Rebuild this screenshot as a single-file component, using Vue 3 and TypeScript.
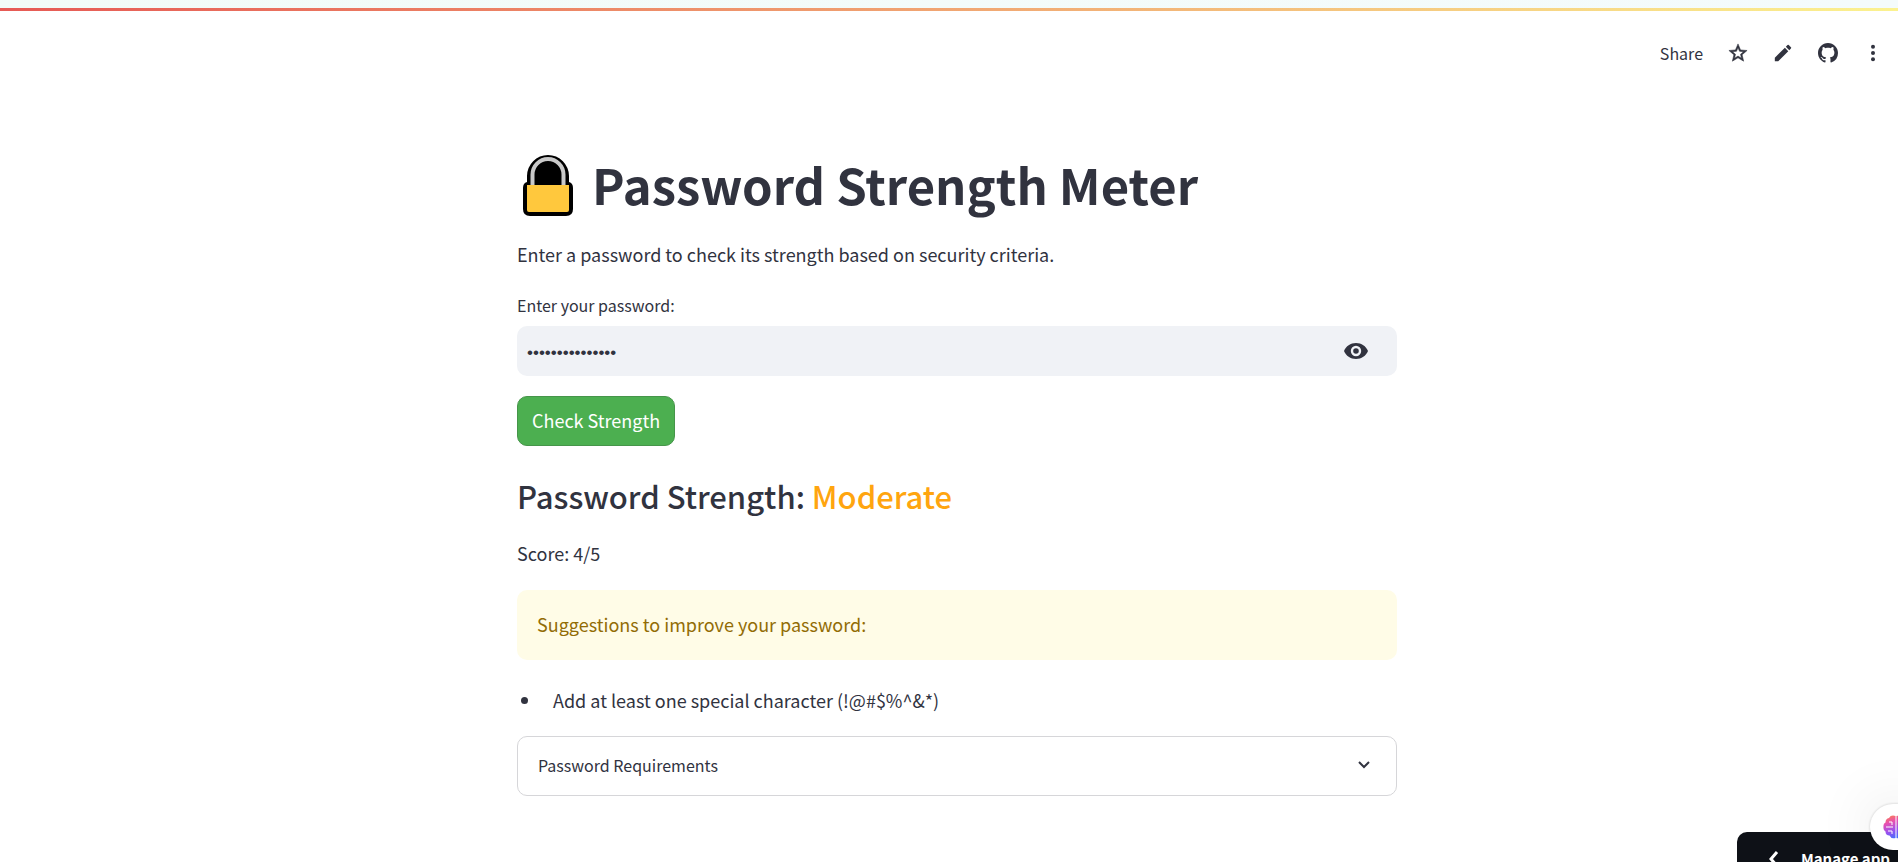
<script setup lang="ts">
import { computed, ref } from 'vue'

const password = ref('Abcdefgh1234567')
const visible = ref(false)
const expanded = ref(false)
const score = ref(4)
const suggestions = ref<string[]>(['Add at least one special character (!@#$%^&*)'])

const requirements = [
  'At least 8 characters',
  'Upper and lower case letters',
  'At least one digit',
  'At least one special character',
]

const strength = computed(() => (score.value === 5 ? 'Strong' : score.value >= 3 ? 'Moderate' : 'Weak'))

function check() {
  const value = password.value
  const tests: [boolean, string][] = [
    [value.length >= 8, 'Use at least 8 characters'],
    [/[A-Z]/.test(value), 'Add an uppercase letter'],
    [/[a-z]/.test(value), 'Add a lowercase letter'],
    [/\d/.test(value), 'Add at least one number'],
    [/[!@#$%^&*]/.test(value), 'Add at least one special character (!@#$%^&*)'],
  ]
  score.value = tests.filter(([ok]) => ok).length
  suggestions.value = tests.filter(([ok]) => !ok).map(([, text]) => text)
}
</script>

<template>
  <div class="app">
    <div class="strip"></div>
    <div class="decoration"></div>

    <header class="toolbar">
      <button class="share" type="button">Share</button>
      <button class="tool star" type="button" aria-label="Favorite">
        <svg viewBox="1 1 22 22"><path d="M22 9.24l-7.19-.62L12 2 9.19 8.63 2 9.24l5.46 4.73L5.82 21 12 17.27 18.18 21l-1.63-7.03L22 9.24zM12 15.4l-3.76 2.27 1-4.28-3.32-2.88 4.38-.38L12 6.1l1.71 4.04 4.38.38-3.32 2.88 1 4.28L12 15.4z" /></svg>
      </button>
      <button class="tool" type="button" aria-label="Edit">
        <svg viewBox="1 1 22 22"><path d="M3 17.25V21h3.75L17.81 9.94l-3.75-3.75L3 17.25zM20.71 7.04a1 1 0 0 0 0-1.41l-2.34-2.34a1 1 0 0 0-1.41 0l-1.83 1.83 3.75 3.75 1.83-1.83z" /></svg>
      </button>
      <button class="tool" type="button" aria-label="View source">
        <svg viewBox="0 0 16 16"><path d="M8 0C3.58 0 0 3.58 0 8c0 3.54 2.29 6.53 5.47 7.59.4.07.55-.17.55-.38 0-.19-.01-.82-.01-1.49-2.01.37-2.53-.49-2.69-.94-.09-.23-.48-.94-.82-1.13-.28-.15-.68-.52-.01-.53.63-.01 1.08.58 1.23.82.72 1.21 1.87.87 2.33.66.07-.52.28-.87.51-1.07-1.78-.2-3.64-.89-3.64-3.95 0-.87.31-1.59.82-2.15-.08-.2-.36-1.02.08-2.12 0 0 .67-.21 2.2.82.64-.18 1.32-.27 2-.27s1.36.09 2 .27c1.53-1.04 2.2-.82 2.2-.82.44 1.1.16 1.92.08 2.12.51.56.82 1.27.82 2.15 0 3.07-1.87 3.75-3.65 3.95.29.25.54.73.54 1.48 0 1.07-.01 1.93-.01 2.2 0 .21.15.46.55.38A8.01 8.01 0 0 0 16 8c0-4.42-3.58-8-8-8z" /></svg>
      </button>
      <button class="tool" type="button" aria-label="More options">
        <svg viewBox="1 1 22 22"><circle cx="12" cy="5" r="2.2" /><circle cx="12" cy="12" r="2.2" /><circle cx="12" cy="19" r="2.2" /></svg>
      </button>
    </header>

    <main class="content">
      <h1 class="title">
        <svg class="lock" viewBox="0 -2 52 66" role="img" aria-label="Lock">
          <path d="M5 29V23a21 21 0 0 1 42 0v6q4 1 4 6v21q0 7-7 7H8q-7 0-7-7V35q0-5 4-6z" fill="#000" />
          <path d="M10.500 32V21.500a15.500 15.500 0 0 1 31 0V32" fill="none" stroke="#c9c9c9" stroke-width="4" />
          <path d="M5 32h42v25q0 2-2 2H7q-2 0-2-2z" fill="#ffc83d" />
        </svg>
        <span>Password Strength Meter</span>
      </h1>
      <p class="text">Enter a password to check its strength based on security criteria.</p>

      <form class="form" @submit.prevent="check">
        <label class="label" for="password">Enter your password:</label>
        <div class="field">
          <input id="password" v-model="password" :type="visible ? 'text' : 'password'" autocomplete="off" />
          <button class="eye" type="button" aria-label="Show password" @click="visible = !visible">
            <svg viewBox="0 0 24 16"><path fill-rule="evenodd" d="M12 0C6.500 0 2 3.200 0 8c2 4.800 6.500 8 12 8s10-3.200 12-8c-2-4.800-6.500-8-12-8zm0 13.200a5.200 5.200 0 1 1 0-10.400 5.200 5.200 0 0 1 0 10.400zM12 5.200a2.800 2.800 0 1 0 0 5.600 2.800 2.800 0 0 0 0-5.600z" /></svg>
          </button>
        </div>
        <button class="submit" type="submit">Check Strength</button>
      </form>

      <h3 class="result">Password Strength: <span class="level">{{ strength }}</span></h3>
      <p class="text">Score: {{ score }}/5</p>

      <div class="alert" role="alert">Suggestions to improve your password:</div>
      <ul class="list">
        <li v-for="item in suggestions" :key="item">{{ item }}</li>
      </ul>

      <section class="expander">
        <button class="summary" type="button" :aria-expanded="expanded" @click="expanded = !expanded">
          <span>Password Requirements</span>
          <svg viewBox="0 0 12 8"><path d="M1 1l5 5 5-5" /></svg>
        </button>
        <ul v-if="expanded" class="list">
          <li v-for="item in requirements" :key="item">{{ item }}</li>
        </ul>
      </section>
    </main>

    <button class="manage" type="button">
      <svg viewBox="0 0 10 16"><path d="M8 1L2 8l6 7" /></svg>
      <span>Manage app</span>
    </button>
    <button class="assistant" type="button" aria-label="Assistant">
      <svg viewBox="0 0 26 24">
        <defs>
          <linearGradient id="brain" x1="0" y1="0" x2="0.4" y2="1">
            <stop offset="0" stop-color="#ff8a3c" />
            <stop offset="0.35" stop-color="#e84fb0" />
            <stop offset="0.7" stop-color="#9b51ee" />
            <stop offset="1" stop-color="#4b6bfb" />
          </linearGradient>
        </defs>
        <path fill="url(#brain)" d="M12.500 1v22Q8 24 6.500 20.500 2.500 20.500 2.500 16.500 0 15 .5 12 0 8.500 2.500 7.500 2.500 3.500 6 3 8-.5 12.500 1zM13.500 1v22q4.500 1 6-2.500 4 0 4-4 2.500-1.500 2-4.500.5-3.500-2-4.500 0-4-3.500-4.500-2-3.500-6.500-2z" />
        <path fill="none" stroke="#fff" stroke-width="1" d="M3 12h7M6 7h3v3M5 16h4v3M23 12h-7M20 7h-3v3M21 16h-4v3" />
      </svg>
    </button>
  </div>
</template>

<style>
body {
  margin: 0;
  background: #fff;
}
</style>

<style scoped>
.app {
  min-height: 100vh;
  overflow: hidden;
  color: #31333f;
  font-family: "Noto Sans CJK SC", "Noto Sans", sans-serif;
  font-size: 18px;
  line-height: 32px;
}

button {
  padding: 0;
  border: 0;
  background: none;
  color: inherit;
  font: inherit;
  cursor: pointer;
}

svg {
  display: block;
  fill: currentColor;
}

.strip {
  height: 8px;
  background: linear-gradient(90deg, #f2fcf8, #f4fbfc);
}

.decoration {
  height: 3px;
  background: linear-gradient(90deg, #e65a55, #fbf290);
}

.toolbar {
  display: flex;
  align-items: center;
  justify-content: flex-end;
  gap: 25px;
  height: 84px;
  padding-right: 15px;
}

.share {
  font-size: 16px;
}

.tool svg {
  width: 20px;
  height: 20px;
}

.star svg {
  stroke: currentColor;
  stroke-width: 0.6;
}

.content {
  box-sizing: border-box;
  width: 100%;
  max-width: 896px;
  margin: 0 auto;
  padding: 56px 0 64px 16px;
}

.title {
  display: flex;
  align-items: center;
  gap: 18px;
  margin: 0 0 21px;
  padding-left: 5px;
  font-size: 49px;
  line-height: 66px;
  font-weight: 700;
}

.lock {
  width: 52px;
  height: 66px;
}

.text {
  margin: 0 0 20px;
}

.form {
  display: flex;
  flex-direction: column;
  align-items: flex-start;
}

.label {
  margin-bottom: 6px;
  font-size: 16px;
  line-height: 30px;
}

.field {
  display: flex;
  align-items: center;
  box-sizing: border-box;
  width: 100%;
  height: 50px;
  margin-bottom: 20px;
  padding: 0 29px 0 10px;
  border-radius: 10px;
  background: #f0f2f6;
}

.field input {
  flex: 1;
  min-width: 0;
  padding: 3px 0 0;
  border: 0;
  outline: 0;
  background: transparent;
  color: inherit;
  font-family: "Liberation Sans", sans-serif;
  font-size: 17px;
}

.eye svg {
  width: 24px;
  height: 16px;
}

.submit {
  height: 50px;
  padding: 0 14px 2px;
  border: 1px solid #46954a;
  border-radius: 10px;
  background: #4caf50;
  color: #fff;
}

.result {
  margin: 29px 0 20px;
  font-size: 31px;
  line-height: 42px;
  font-weight: 500;
}

.level {
  color: #ffa50f;
}

.alert {
  margin-top: 21px;
  padding: 18px 20px 20px;
  border-radius: 10px;
  background: #fffce7;
  color: #926c05;
}

.list {
  margin: 24px 0 20px;
  padding: 0 0 0 4px;
  list-style: none;
}

.list li {
  display: flex;
  align-items: center;
  gap: 25px;
}

.list li::before {
  content: "";
  flex: none;
  width: 7px;
  height: 7px;
  border-radius: 50%;
  background: currentColor;
}

.expander {
  border: 1px solid #d6d6d9;
  border-radius: 10px;
}

.summary {
  display: flex;
  align-items: center;
  justify-content: space-between;
  width: 100%;
  height: 58px;
  padding: 0 26px 2px 20px;
  font-size: 16px;
}

.summary svg {
  width: 12px;
  height: 8px;
  fill: none;
  stroke: currentColor;
  stroke-width: 2;
}

.manage {
  position: fixed;
  right: 0;
  bottom: -24px;
  display: flex;
  align-items: center;
  gap: 22px;
  height: 54px;
  padding: 0 8px 0 32px;
  border-radius: 10px 0 0 0;
  background: #0e1117;
  color: #fff;
  font-size: 15px;
  font-weight: 700;
}

.manage svg {
  width: 10px;
  height: 16px;
  fill: none;
  stroke: currentColor;
  stroke-width: 3;
}

.assistant {
  position: fixed;
  right: -24px;
  bottom: 12px;
  display: flex;
  align-items: center;
  justify-content: center;
  width: 52px;
  height: 46px;
  border-radius: 23px;
  background: #fff;
  box-shadow: 0 0 60px rgba(0, 0, 0, 0.12), 0 0 3px rgba(0, 0, 0, 0.2);
}

.assistant svg {
  width: 26px;
  height: 24px;
}
</style>
